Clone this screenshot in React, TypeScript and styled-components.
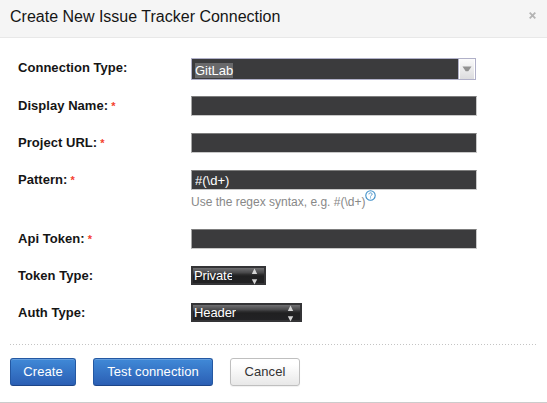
import React from "react";
import styled, { createGlobalStyle, css } from "styled-components";

const GlobalStyle = createGlobalStyle`
  * { box-sizing: border-box; }
  body {
    margin: 0;
    background: #fff;
    font-family: "Liberation Sans", Arial, sans-serif;
    font-size: 13px;
    color: #151515;
  }
`;

const Dialog = styled.div`
  width: 547px;
  height: 403px;
  border-bottom: 1px solid #ccc;
  overflow: hidden;
  background: #fff;
`;

const Header = styled.header`
  display: flex;
  justify-content: space-between;
  height: 38px;
  padding: 0 10px;
  background: #f5f5f5;
  border-bottom: 1px solid #e8e8e8;
`;

const Title = styled.h1`
  margin: 0;
  font-size: 16px;
  font-weight: 400;
  line-height: 18px;
  padding-top: 8px;
`;

const Close = styled.button`
  border: 0;
  padding: 0;
  margin: 12px 0 0;
  width: 9px;
  height: 7px;
  background: none;
  line-height: 0;
`;

const Form = styled.div`
  padding: 20px 0 0 18px;
`;

const Row = styled.div<{ $height: number }>`
  display: grid;
  grid-template-columns: 173px 286px;
  align-items: start;
  height: ${(p) => p.$height}px;
`;

const Label = styled.label`
  font-weight: 700;
  line-height: 15px;
  letter-spacing: 0.04px;
  white-space: nowrap;
  padding-top: 2px;
`;

const Required = styled.span`
  color: #f4402e;
  font-size: 11px;
`;

const Combo = styled.div`
  display: flex;
  width: 285px;
  height: 22px;
  border: 1px solid #b0b0c8;
  background: #3b3b3d;
  color: #fff;
`;

const ComboText = styled.div`
  flex: 1;
  padding: 4px 0 0 3px;
  line-height: 15px;
`;

const Selection = styled.span`
  display: inline-block;
  background: #69696b;
`;

const ComboArrow = styled.div`
  display: flex;
  align-items: center;
  justify-content: center;
  width: 17px;
  border-left: 1px solid #b0b0c8;
  box-shadow: inset 1px 0 #fff, inset -1px 0 #fff;
  background: linear-gradient(#fbfbfb, #dcdcde);
`;

const Input = styled.input`
  display: block;
  width: 286px;
  height: 20px;
  padding: 1px 3px;
  border: 1px solid;
  border-color: #7d7d7d #c8c8c8 #c8c8c8 #a6a6a6;
  border-radius: 0;
  outline: 0;
  background: #3b3b3d;
  color: #fff;
  font: 13px "Liberation Sans", Arial, sans-serif;
`;

const Hint = styled.div`
  display: flex;
  height: 20px;
  color: #888;
  font-size: 12px;
  line-height: 14px;
  white-space: nowrap;
`;

const HintText = styled.span`
  padding-top: 5px;
`;

const Select = styled.div<{ $width: number }>`
  display: flex;
  justify-content: space-between;
  width: ${(p) => p.$width}px;
  height: 19px;
  border: 2px solid #343436;
  padding: 0 6px 0 1px;
  background: linear-gradient(#707072 0, #4a4a4c 30%, #2a2a2b 45%, #202021 55%, #222224 100%);
  color: #fff;
  line-height: 15px;
  letter-spacing: -0.1px;
`;

const SelectText = styled.span<{ $clip?: number }>`
  width: ${(p) => (p.$clip ? `${p.$clip}px` : "auto")};
  overflow: hidden;
`;

const Footer = styled.footer`
  display: flex;
  gap: 17px;
  margin: 4px 10px 0;
  padding-top: 14px;
  background: repeating-linear-gradient(90deg, #c4c4c4 0 1px, transparent 1px 3px) 0 0 / 100% 1px no-repeat;
`;

const Button = styled.button<{ $width: number; $primary?: boolean }>`
  width: ${(p) => p.$width}px;
  height: 28px;
  padding: 0 0 1px;
  border: 1px solid #bfbfbf;
  border-radius: 3px;
  background: linear-gradient(#fff 20%, #e8e8e8);
  color: #333;
  font: 13px/15px "Liberation Sans", Arial, sans-serif;
  letter-spacing: 0.08px;
  white-space: nowrap;
  box-shadow: 0 1px 1px rgba(0, 0, 0, 0.06);
  ${(p) =>
    p.$primary &&
    css`
      border-color: #2458a2 #2458a2 #1d4588;
      background: linear-gradient(#4089d7, #2b5fb4);
      color: #fff;
      box-shadow: inset 0 1px rgba(255, 255, 255, 0.2);
    `}
`;

const Stepper = () => (
  <svg width="7" height="17" viewBox="0 0 7 17">
    <path d="M3.5.5 6.2 6H.8Z" fill="#d5d5d5" />
    <path d="M.8 11.3h5.4L3.5 16.5Z" fill="#d5d5d5" />
  </svg>
);

const HelpIcon = () => (
  <svg width="11" height="11" viewBox="0 0 11 11" fill="none" stroke="#3f8fc8">
    <circle cx="5.5" cy="5.5" r="4.7" strokeWidth="1.1" />
    <path d="M3.9 4.3c.1-2 3.3-1.9 3.2 0 0 1.1-1.6 1.1-1.6 2.2M5.5 7.4v1" strokeWidth="0.9" />
  </svg>
);

interface FieldProps {
  label: string;
  height: number;
  required?: boolean;
  children: React.ReactNode;
}

const Field = ({ label, height, required, children }: FieldProps) => (
  <Row $height={height}>
    <Label>
      {label}:{required && <Required> *</Required>}
    </Label>
    <div>{children}</div>
  </Row>
);

export default function App() {
  return (
    <>
      <GlobalStyle />
      <Dialog>
        <Header>
          <Title>Create New Issue Tracker Connection</Title>
          <Close aria-label="Close">
            <svg width="7" height="7" viewBox="0 0 7 7" stroke="#b4b4b4" strokeWidth="1.8">
              <path d="M.7.7 6.3 6.3M6.3.7.7 6.3" />
            </svg>
          </Close>
        </Header>
        <Form>
          <Field label="Connection Type" height={38}>
            <Combo>
              <ComboText>
                <Selection>GitLab</Selection>
              </ComboText>
              <ComboArrow>
                <svg width="10" height="6" viewBox="0 0 10 6">
                  <path d="M.5.5h9L6.3 5.2H3.7Z" fill="#929292" />
                </svg>
              </ComboArrow>
            </Combo>
          </Field>
          <Field label="Display Name" height={37} required>
            <Input />
          </Field>
          <Field label="Project URL" height={37} required>
            <Input />
          </Field>
          <Field label="Pattern" height={59} required>
            <Input defaultValue="#(\d+)" />
            <Hint>
              <HintText>Use the regex syntax, e.g. #(\d+)</HintText>
              <HelpIcon />
            </Hint>
          </Field>
          <Field label="Api Token" height={37} required>
            <Input />
          </Field>
          <Field label="Token Type" height={37}>
            <Select $width={75}>
              <SelectText $clip={38}>Private</SelectText>
              <Stepper />
            </Select>
          </Field>
          <Field label="Auth Type" height={37}>
            <Select $width={111}>
              <SelectText>Header</SelectText>
              <Stepper />
            </Select>
          </Field>
        </Form>
        <Footer>
          <Button $width={66} $primary>Create</Button>
          <Button $width={120} $primary>Test connection</Button>
          <Button $width={70}>Cancel</Button>
        </Footer>
      </Dialog>
    </>
  );
}
